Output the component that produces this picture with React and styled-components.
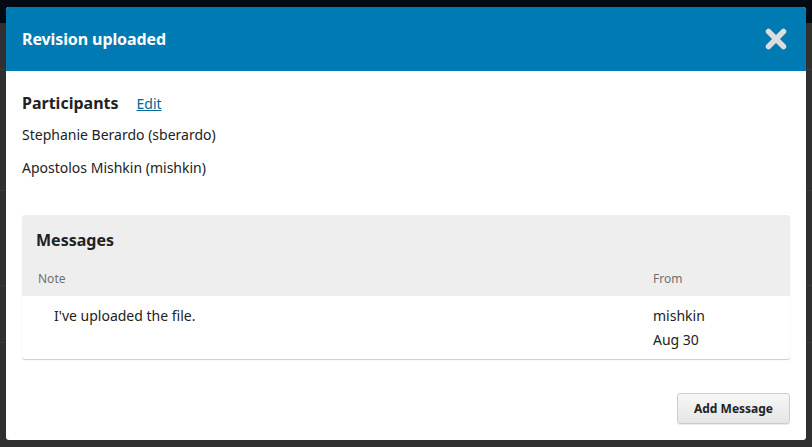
import styled, { createGlobalStyle } from "styled-components";

const Global = createGlobalStyle`
  html, body { margin: 0; padding: 0; }
  body {
    background: #303030;
    font-family: "Noto Sans", "Open Sans", sans-serif;
    color: #222;
    width: 812px;
    height: 447px;
    overflow: hidden;
  }
`;

const Overlay = styled.div`
  position: relative;
  height: 447px;
  background: linear-gradient(#020b14 0 23px, #303030 23px);
`;

const PageHint = styled.div`
  position: absolute;
  left: 0;
  right: 0;
  top: ${(p) => p.top}px;
  height: 1px;
  background: #3a3a3a;
`;

const Dialog = styled.div`
  position: absolute;
  left: 6px;
  top: 7px;
  width: 800px;
  height: 433px;
  background: #fff;
  border-radius: 3px;
  overflow: hidden;
  display: flex;
  flex-direction: column;
`;

const Header = styled.div`
  height: 64px;
  flex-shrink: 0;
  background: #007ab2;
  display: flex;
  align-items: center;
  justify-content: space-between;
  padding: 0 19px 0 16px;
`;

const Title = styled.h1`
  margin: 0;
  font-size: 16px;
  font-weight: 700;
  color: #fff;
  letter-spacing: -0.1px;
`;

const Close = styled.button`
  border: 0;
  background: none;
  padding: 0;
  width: 22px;
  height: 22px;
  display: flex;
  cursor: pointer;
`;

const Body = styled.div`
  flex: 1;
  display: flex;
  flex-direction: column;
  padding: 21px 16px 16px;
`;

const SectionHead = styled.div`
  display: flex;
  align-items: baseline;
  gap: 18px;
  line-height: 22px;
`;

const Label = styled.h2`
  margin: 0;
  font-size: 16px;
  font-weight: 700;
  color: #222;
`;

const Link = styled.a`
  font-size: 14px;
  color: #006798;
  text-decoration: underline;
`;

const Person = styled.div`
  font-size: 14px;
  line-height: 20px;
  margin-top: ${(p) => p.gap}px;
  color: #222;
`;

const Panel = styled.div`
  margin-top: 37px;
  border-radius: 3px;
  box-shadow: 0 1px 1px rgba(0, 0, 0, 0.2);
  overflow: hidden;
`;

const PanelHead = styled.div`
  background: #eee;
  padding: 14px 14px 0;
`;

const PanelTitle = styled.h3`
  margin: 0;
  font-size: 16px;
  font-weight: 700;
  line-height: 22px;
  color: #222;
`;

const Grid = styled.div`
  display: grid;
  grid-template-columns: 1fr 123px;
`;

const ColHead = styled(Grid)`
  padding: 19px 0 8px 2px;
  font-size: 12px;
  color: #707070;
  line-height: 18px;
`;

const Row = styled(Grid)`
  padding: 8px 14px 7px;
  font-size: 14px;
  line-height: 24px;
  color: #222;
`;

const Note = styled.div`
  padding-left: 18px;
`;

const From = styled.div`
  display: flex;
  flex-direction: column;
`;

const Footer = styled.div`
  margin-top: auto;
  display: flex;
  justify-content: flex-end;
`;

const Button = styled.button`
  width: 113px;
  height: 31px;
  border: 1px solid #ccc;
  border-radius: 3px;
  background: linear-gradient(#f7f7f7, #e5e5e5);
  font-family: inherit;
  font-size: 12px;
  font-weight: 700;
  color: #222;
  box-shadow: 0 1px 0 rgba(0, 0, 0, 0.08);
`;

const X = () => (
  <svg width="22" height="22" viewBox="0 0 22 22">
    <path d="M3.5 3.5 L18.5 18.5 M18.5 3.5 L3.5 18.5" stroke="#ddd" strokeWidth="5.5" strokeLinecap="round" fill="none" />
  </svg>
);

export default function App() {
  return (
    <>
      <Global />
      <Overlay>
        <PageHint top={69} />
        <PageHint top={190} />
        <PageHint top={285} />
        <PageHint top={342} />
        <Dialog>
          <Header>
            <Title>Revision uploaded</Title>
            <Close aria-label="Close"><X /></Close>
          </Header>
          <Body>
            <SectionHead>
              <Label>Participants</Label>
              <Link href="#">Edit</Link>
            </SectionHead>
            <Person gap={10}>Stephanie Berardo (sberardo)</Person>
            <Person gap={13}>Apostolos Mishkin (mishkin)</Person>
            <Panel>
              <PanelHead>
                <PanelTitle>Messages</PanelTitle>
                <ColHead>
                  <div>Note</div>
                  <div>From</div>
                </ColHead>
              </PanelHead>
              <Row>
                <Note>I've uploaded the file.</Note>
                <From>
                  <span>mishkin</span>
                  <span>Aug 30</span>
                </From>
              </Row>
            </Panel>
            <Footer>
              <Button>Add Message</Button>
            </Footer>
          </Body>
        </Dialog>
      </Overlay>
    </>
  );
}
